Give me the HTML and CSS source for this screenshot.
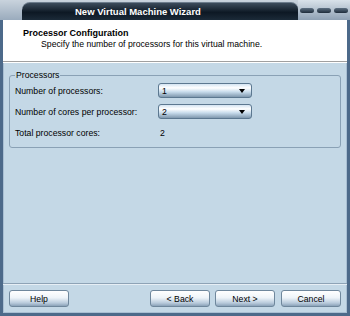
FILE: index.html
```html
<!DOCTYPE html>
<html>
  <head>
    <meta charset="UTF-8" />
    <title>New Virtual Machine Wizard</title>
    <link rel="stylesheet" href="styles.css">
  </head>
  <body>
    <div class="window">
      <div class="title-bar">
        <div class="title-edge"></div>
        <div class="title-tab"><span class="title-text">New Virtual Machine Wizard</span></div>
        <div class="title-pills"><span></span><span></span><span></span></div>
      </div>
      <div class="frame">
        <div class="header">
          <div class="header-title">Processor Configuration</div>
          <div class="header-sub">Specify the number of processors for this virtual machine.</div>
        </div>
        <div class="content">
          <fieldset class="group">
            <legend>Processors</legend>
            <div class="row">
              <span class="label">Number of processors:</span>
              <div class="combo"><span>1</span><i class="arrow"></i></div>
            </div>
            <div class="row">
              <span class="label">Number of cores per processor:</span>
              <div class="combo"><span>2</span><i class="arrow"></i></div>
            </div>
            <div class="row">
              <span class="label">Total processor cores:</span>
              <span class="value">2</span>
            </div>
          </fieldset>
        </div>
        <div class="footer">
          <button class="btn">Help</button>
          <div class="nav">
            <button class="btn">&lt; Back</button>
            <button class="btn">Next &gt;</button>
            <button class="btn cancel">Cancel</button>
          </div>
        </div>
      </div>
    </div>
  </body>
</html>
```
FILE: styles.css
```css
*{
	box-sizing:border-box;
}

body{
	margin:0;
	background:#c4d8e6;
	font-family:"Liberation Sans", Arial, sans-serif;
	font-size:8.7px;
	color:#000;
}

.window{
	width:350px;
	height:316px;
	display:flex;
	flex-direction:column;
	overflow:hidden;
}

/* title bar */
.title-bar{
	height:20px;
	display:flex;
	background:linear-gradient(#c9d3dd, #9aabbd);
}

.title-edge{
	width:22px;
}

.title-tab{
	flex:1;
	display:flex;
	align-items:center;
	margin-top:2px;
	background:linear-gradient(#3c4c5c, #0d1824 55%, #1b2a38);
	border-radius:8px 7px 0 0;
	border-top:1px solid #6c7c8c;
}

.title-text{
	color:#fff;
	font-weight:bold;
	font-size:9.5px;
	padding-left:53px;
}

.title-pills{
	width:52px;
	display:flex;
	align-items:center;
	gap:3px;
	padding:0 2px;
	background:linear-gradient(#d9e2ea, #8fa1b4);
}

.title-pills span{
	width:14px;
	height:5px;
	border-radius:3px;
	background:linear-gradient(#5d6f82, #1e2c3a);
}

.frame{
	flex:1;
	display:flex;
	flex-direction:column;
	border:3px solid #4d6a8a;
	border-top:none;
	box-shadow:inset 1px 0 0 #a9bfd3, inset -1px 0 0 #a9bfd3, inset 0 -1px 0 #a9bfd3;
}

.header{
	background:#fff;
	height:42px;
	padding:0 0 0 20px;
	border-bottom:1px solid #a0a0a0;
	box-shadow:0 1px 0 #fff;
}

.header-title{
	font-weight:bold;
	font-size:9px;
	margin-top:8px;
}

.header-sub{
	margin-top:1px;
	padding-left:18px;
}

.content{
	flex:1;
	padding:9px 6px 0 6px;
	border-bottom:1px solid #8ea3b6;
	box-shadow:0 1px 0 #e6eef5;
}

.group{
	margin:0;
	padding:0 6px 4px 5px;
	border:1px solid #8aa1b5;
	border-radius:3px;
}

.group legend{
	padding:0 1px;
	line-height:9px;
	color:#000;
}

.row{
	display:flex;
	align-items:center;
	height:21px;
}

.label{
	width:143px;
}

.value{
	padding-left:2px;
}

.combo{
	width:94px;
	height:15px;
	display:flex;
	align-items:center;
	justify-content:space-between;
	padding:0 6px 0 3px;
	border:1px solid #5c7890;
	border-radius:3px;
	background:linear-gradient(#d4e4f2, #ffffff 30%, #c8dcec 60%, #7f98ae);
}

.arrow{
	width:0;
	height:0;
	border-left:3.5px solid transparent;
	border-right:3.5px solid transparent;
	border-top:4px solid #000;
}

.footer{
	height:29px;
	display:flex;
	justify-content:space-between;
	align-items:center;
	padding:0 6px;
}

.nav{
	display:flex;
	gap:5px;
}

.btn{
	width:60px;
	height:17px;
	padding:0;
	font-family:"Liberation Sans", Arial, sans-serif;
	font-size:8.7px;
	color:#000;
	border:1px solid #6f879c;
	border-radius:3px;
	background:linear-gradient(#ffffff, #eef4f9 45%, #b8cadb 80%, #8ba2b8);
}

.cancel{
	margin-left:1px;
}
```
